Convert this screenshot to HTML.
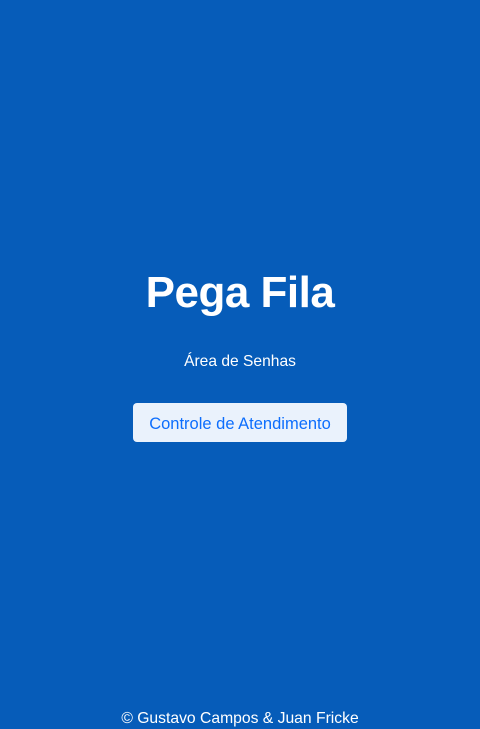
<!DOCTYPE html>
<html><head><meta charset="utf-8"><style>
html,body{margin:0;padding:0;}
body{width:480px;height:728px;background:#065cb9;font-family:"Liberation Sans",sans-serif;color:#fff;position:relative;overflow:hidden;}
h1{position:absolute;top:263px;left:0;width:480px;margin:0;text-align:center;font-size:44px;font-weight:bold;line-height:60px;letter-spacing:-0.5px;}
.sub{position:absolute;top:352px;left:0;width:480px;text-align:center;font-size:15.6px;line-height:20px;}
.btn{position:absolute;left:133px;top:403px;width:214px;height:39px;background:#eaf2fc;border-radius:4px;color:#0d6efd;font-size:16.5px;line-height:42px;text-align:center;}
.foot{position:absolute;top:709px;left:0;width:480px;text-align:center;font-size:15.7px;line-height:20px;}
</style></head><body>
<h1>Pega Fila</h1>
<div class="sub">Área de Senhas</div>
<div class="btn">Controle de Atendimento</div>
<div class="foot">© Gustavo Campos &amp; Juan Fricke</div>
</body></html>
